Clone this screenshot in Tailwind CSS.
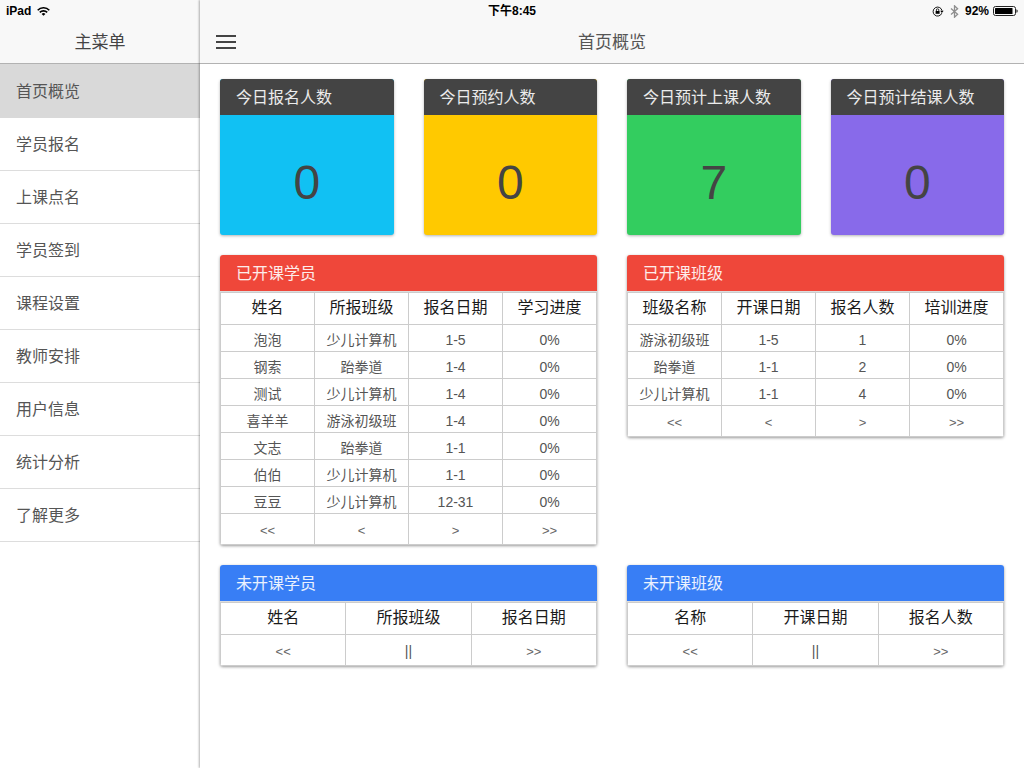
<!DOCTYPE html>
<html lang="zh-CN">
<head>
<meta charset="utf-8">
<meta name="viewport" content="width=device-width, initial-scale=1">
<title>首页概览</title>
<script src="https://cdn.jsdelivr.net/npm/@tailwindcss/browser@4"></script>
</head>
<body class="min-h-screen bg-white font-['Liberation_Sans','Noto_Sans_CJK_SC',sans-serif] text-[#444]">
<div class="flex min-h-screen">

  <aside class="w-[200px] shrink-0 bg-white">
    <header class="flex h-16 flex-col border-b border-[#b2b2b2] bg-[#f8f8f8]">
      <div class="flex h-5 items-center gap-1.5 pl-1.5 pt-0.5 text-xs font-bold text-black">
        <span>iPad</span>
        <svg class="h-[9px] w-[13px]" viewBox="0 0 13 9" fill="none" stroke="#000" stroke-width="1.6" aria-hidden="true"><path d="M.7 3.2a8.2 8.2 0 0 1 11.6 0M2.8 5.4a5.2 5.2 0 0 1 7.4 0"/><path d="M4.6 6.9a2.7 2.7 0 0 1 3.8 0L6.5 8.8z" fill="#000" stroke="none"/></svg>
      </div>
      <h2 class="flex flex-1 items-center justify-center pt-0.5 text-[17px] leading-none font-normal">主菜单</h2>
    </header>
    <nav>
      <ul class="text-base text-[#555]">
        <li><a href="#" aria-current="page" class="flex h-[54px] items-center border-b border-[#d9d9d9] bg-[#d9d9d9] px-4 pt-0.5">首页概览</a></li>
        <li><a href="#" class="flex h-[53px] items-center border-b border-[#ddd] px-4 pt-0.5">学员报名</a></li>
        <li><a href="#" class="flex h-[53px] items-center border-b border-[#ddd] px-4 pt-0.5">上课点名</a></li>
        <li><a href="#" class="flex h-[53px] items-center border-b border-[#ddd] px-4 pt-0.5">学员签到</a></li>
        <li><a href="#" class="flex h-[53px] items-center border-b border-[#ddd] px-4 pt-0.5">课程设置</a></li>
        <li><a href="#" class="flex h-[53px] items-center border-b border-[#ddd] px-4 pt-0.5">教师安排</a></li>
        <li><a href="#" class="flex h-[53px] items-center border-b border-[#ddd] px-4 pt-0.5">用户信息</a></li>
        <li><a href="#" class="flex h-[53px] items-center border-b border-[#ddd] px-4 pt-0.5">统计分析</a></li>
        <li><a href="#" class="flex h-[53px] items-center border-b border-[#ddd] px-4 pt-0.5">了解更多</a></li>
      </ul>
    </nav>
  </aside>

  <div class="min-w-0 flex-1 bg-white shadow-[-1px_0_2px_rgba(0,0,0,0.3)]">
    <header class="flex h-16 flex-col border-b border-[#b2b2b2] bg-[#f8f8f8]">
      <div class="grid h-5 grid-cols-[1fr_auto_1fr] items-center px-1.5 pt-0.5 text-xs font-bold text-black">
        <span></span>
        <time class="mr-[200px]">下午8:45</time>
        <div class="flex items-center justify-end gap-1.5">
          <svg class="h-[11px] w-[12px]" viewBox="0 0 12 11" fill="none" stroke="#000" aria-hidden="true"><path d="M9.8 7.2A4.5 4.5 0 1 1 10 4.6" stroke-width=".9"/><path d="M8.2 4.7h3.4L9.9 6.9z" fill="#000" stroke="none"/><path d="M3.6 5h4v2.8h-4z" fill="#000" stroke="none"/><path d="M4.4 5V4a1.2 1.2 0 0 1 2.4 0v1" stroke-width=".8"/></svg>
          <svg class="h-[13px] w-[9px]" viewBox="0 0 9 13" fill="none" stroke="#8e8e8e" stroke-width="1.3" aria-hidden="true"><path d="M1 3.6l6.6 5.7-3.1 2.9V.8l3.1 2.9L1 9.4"/></svg>
          <span>92%</span>
          <svg class="-ml-0.5 h-[10px] w-[25px]" viewBox="0 0 25 10" aria-hidden="true"><rect x=".5" y=".5" width="22" height="9" rx="2" fill="none" stroke="#222"/><rect x="2" y="2" width="17.5" height="6" rx=".5"/><path d="M23.5 3.2c1.5.5 1.5 3.1 0 3.6z"/></svg>
        </div>
      </div>
      <div class="grid flex-1 grid-cols-[1fr_auto_1fr] items-center px-4">
        <button type="button" aria-label="菜单" class="flex w-5 flex-col gap-1"><span class="h-0.5 bg-[#444]"></span><span class="h-0.5 bg-[#444]"></span><span class="h-0.5 bg-[#444]"></span></button>
        <h1 class="pt-0.5 text-[17px] leading-none text-[#555]">首页概览</h1>
      </div>
    </header>

    <main class="flex flex-col gap-5 px-5 pt-[15px]">
      <section class="grid grid-cols-4 gap-[30px]">
        <article class="overflow-hidden rounded-[3px] bg-[#11c1f3] shadow-[0_1px_3px_rgba(0,0,0,0.3)]">
          <h3 class="flex h-9 items-center bg-[#444] px-4 pt-0.5 text-base text-white/90">今日报名人数</h3>
          <p class="flex h-[120px] items-center justify-center pt-4 text-5xl">0</p>
        </article>
        <article class="overflow-hidden rounded-[3px] bg-[#ffc900] shadow-[0_1px_3px_rgba(0,0,0,0.3)]">
          <h3 class="flex h-9 items-center bg-[#444] px-4 pt-0.5 text-base text-white/90">今日预约人数</h3>
          <p class="flex h-[120px] items-center justify-center pt-4 text-5xl">0</p>
        </article>
        <article class="overflow-hidden rounded-[3px] bg-[#33cd5f] shadow-[0_1px_3px_rgba(0,0,0,0.3)]">
          <h3 class="flex h-9 items-center bg-[#444] px-4 pt-0.5 text-base text-white/90">今日预计上课人数</h3>
          <p class="flex h-[120px] items-center justify-center pt-4 text-5xl">7</p>
        </article>
        <article class="overflow-hidden rounded-[3px] bg-[#886aea] shadow-[0_1px_3px_rgba(0,0,0,0.3)]">
          <h3 class="flex h-9 items-center bg-[#444] px-4 pt-0.5 text-base text-white/90">今日预计结课人数</h3>
          <p class="flex h-[120px] items-center justify-center pt-4 text-5xl">0</p>
        </article>
      </section>

      <section class="grid grid-cols-2 items-start gap-[30px]">
        <article class="overflow-hidden rounded-[3px] shadow-[0_1px_3px_rgba(0,0,0,0.4)]">
          <h3 id="t1" class="flex h-[37px] items-center border-b border-[#ddd] bg-[#ef473a] px-4 pt-0.5 text-base text-white/90">已开课学员</h3>
          <table aria-labelledby="t1" class="w-full table-fixed border-separate border-spacing-0 border-l border-t border-[#ccc] text-center text-sm leading-5 text-[#555] [&_button]:text-[13px] [&_button]:text-[#666] [&_td]:border-b [&_td]:border-r [&_td]:border-[#ccc] [&_td]:pt-1 [&_th]:border-b [&_th]:border-r [&_th]:border-[#ccc] [&_th]:pb-0.5">
            <thead class="text-base text-[#1a1a1a]"><tr class="h-8 [&>th]:font-normal"><th>姓名</th><th>所报班级</th><th>报名日期</th><th>学习进度</th></tr></thead>
            <tbody>
              <tr class="h-[27px]"><td>泡泡</td><td>少儿计算机</td><td>1-5</td><td>0%</td></tr>
              <tr class="h-[27px]"><td>钢索</td><td>跆拳道</td><td>1-4</td><td>0%</td></tr>
              <tr class="h-[27px]"><td>测试</td><td>少儿计算机</td><td>1-4</td><td>0%</td></tr>
              <tr class="h-[27px]"><td>喜羊羊</td><td>游泳初级班</td><td>1-4</td><td>0%</td></tr>
              <tr class="h-[27px]"><td>文志</td><td>跆拳道</td><td>1-1</td><td>0%</td></tr>
              <tr class="h-[27px]"><td>伯伯</td><td>少儿计算机</td><td>1-1</td><td>0%</td></tr>
              <tr class="h-[27px]"><td>豆豆</td><td>少儿计算机</td><td>12-31</td><td>0%</td></tr>
              <tr class="h-[31px] [&>td]:pb-0.5"><td><button type="button">&lt;&lt;</button></td><td><button type="button">&lt;</button></td><td><button type="button">&gt;</button></td><td><button type="button">&gt;&gt;</button></td></tr>
            </tbody>
          </table>
        </article>

        <article class="overflow-hidden rounded-[3px] shadow-[0_1px_3px_rgba(0,0,0,0.4)]">
          <h3 id="t2" class="flex h-[37px] items-center border-b border-[#ddd] bg-[#ef473a] px-4 pt-0.5 text-base text-white/90">已开课班级</h3>
          <table aria-labelledby="t2" class="w-full table-fixed border-separate border-spacing-0 border-l border-t border-[#ccc] text-center text-sm leading-5 text-[#555] [&_button]:text-[13px] [&_button]:text-[#666] [&_td]:border-b [&_td]:border-r [&_td]:border-[#ccc] [&_td]:pt-1 [&_th]:border-b [&_th]:border-r [&_th]:border-[#ccc] [&_th]:pb-0.5">
            <thead class="text-base text-[#1a1a1a]"><tr class="h-8 [&>th]:font-normal"><th>班级名称</th><th>开课日期</th><th>报名人数</th><th>培训进度</th></tr></thead>
            <tbody>
              <tr class="h-[27px]"><td>游泳初级班</td><td>1-5</td><td>1</td><td>0%</td></tr>
              <tr class="h-[27px]"><td>跆拳道</td><td>1-1</td><td>2</td><td>0%</td></tr>
              <tr class="h-[27px]"><td>少儿计算机</td><td>1-1</td><td>4</td><td>0%</td></tr>
              <tr class="h-[31px] [&>td]:pb-0.5"><td><button type="button">&lt;&lt;</button></td><td><button type="button">&lt;</button></td><td><button type="button">&gt;</button></td><td><button type="button">&gt;&gt;</button></td></tr>
            </tbody>
          </table>
        </article>
      </section>

      <section class="grid grid-cols-2 items-start gap-[30px]">
        <article class="overflow-hidden rounded-[3px] shadow-[0_1px_3px_rgba(0,0,0,0.4)]">
          <h3 id="t3" class="flex h-[37px] items-center border-b border-[#ddd] bg-[#387ef5] px-4 pt-0.5 text-base text-white/90">未开课学员</h3>
          <table aria-labelledby="t3" class="w-full table-fixed border-separate border-spacing-0 border-l border-t border-[#ccc] text-center text-sm leading-5 text-[#555] [&_button]:text-[13px] [&_button]:text-[#666] [&_td]:border-b [&_td]:border-r [&_td]:border-[#ccc] [&_td]:pt-1 [&_th]:border-b [&_th]:border-r [&_th]:border-[#ccc] [&_th]:pb-0.5">
            <thead class="text-base text-[#1a1a1a]"><tr class="h-8 [&>th]:font-normal"><th>姓名</th><th>所报班级</th><th>报名日期</th></tr></thead>
            <tbody><tr class="h-[31px] [&>td]:pb-0.5"><td><button type="button">&lt;&lt;</button></td><td>||</td><td><button type="button">&gt;&gt;</button></td></tr></tbody>
          </table>
        </article>
        <article class="overflow-hidden rounded-[3px] shadow-[0_1px_3px_rgba(0,0,0,0.4)]">
          <h3 id="t4" class="flex h-[37px] items-center border-b border-[#ddd] bg-[#387ef5] px-4 pt-0.5 text-base text-white/90">未开课班级</h3>
          <table aria-labelledby="t4" class="w-full table-fixed border-separate border-spacing-0 border-l border-t border-[#ccc] text-center text-sm leading-5 text-[#555] [&_button]:text-[13px] [&_button]:text-[#666] [&_td]:border-b [&_td]:border-r [&_td]:border-[#ccc] [&_td]:pt-1 [&_th]:border-b [&_th]:border-r [&_th]:border-[#ccc] [&_th]:pb-0.5">
            <thead class="text-base text-[#1a1a1a]"><tr class="h-8 [&>th]:font-normal"><th>名称</th><th>开课日期</th><th>报名人数</th></tr></thead>
            <tbody><tr class="h-[31px] [&>td]:pb-0.5"><td><button type="button">&lt;&lt;</button></td><td>||</td><td><button type="button">&gt;&gt;</button></td></tr></tbody>
          </table>
        </article>
      </section>
    </main>
  </div>
</div>
</body>
</html>
